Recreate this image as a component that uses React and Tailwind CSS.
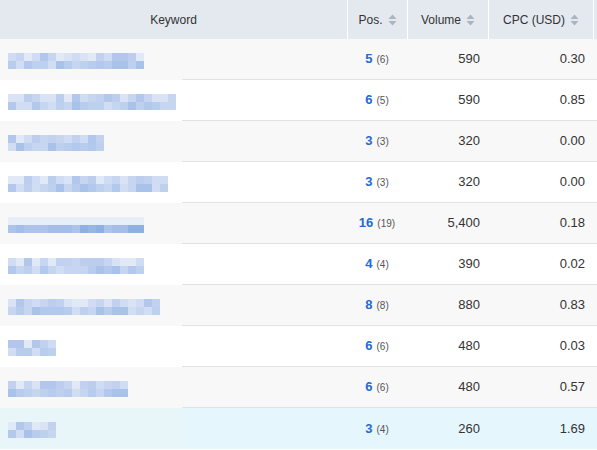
import React from 'react';

const rows = [
  { w: 17, pos: 5, prev: 6, vol: '590', cpc: '0.30', seed: 3 },
  { w: 21, pos: 6, prev: 5, vol: '590', cpc: '0.85', seed: 7 },
  { w: 12, pos: 3, prev: 3, vol: '320', cpc: '0.00', seed: 11 },
  { w: 20, pos: 3, prev: 3, vol: '320', cpc: '0.00', seed: 17 },
  { w: 17, pos: 16, prev: 19, vol: '5,400', cpc: '0.18', seed: 23, dark: true },
  { w: 17, pos: 4, prev: 4, vol: '390', cpc: '0.02', seed: 29 },
  { w: 19, pos: 8, prev: 8, vol: '880', cpc: '0.83', seed: 31 },
  { w: 6, pos: 6, prev: 6, vol: '480', cpc: '0.03', seed: 37 },
  { w: 15, pos: 6, prev: 6, vol: '480', cpc: '0.57', seed: 41 },
  { w: 6, pos: 3, prev: 4, vol: '260', cpc: '1.69', seed: 43, active: true },
];

const topShades = ['#bccdee', '#c7d5f0', '#d0dcf3', '#dae3f5', '#b3c6ec', '#c2d1ef', '#e2e9f6'];
const bottomShades = ['#b2c8ec', '#bdd0ee', '#c6d6f1', '#a9c2ea', '#b8ccee', '#d0ddf3'];
const darkShades = ['#98b6e4', '#a4bee7', '#8fb0e2', '#adc4ea'];

// pixelated stand-in for the blurred keyword
const Blur = ({ w, seed, dark }) => {
  let s = seed;
  const next = () => {
    s = (s * 9301 + 49297) % 233280;
    return s / 233280;
  };
  const top = Array.from({ length: w }, () => topShades[Math.floor(next() * topShades.length)]);
  const bottom = Array.from({ length: w }, () =>
    dark ? darkShades[Math.floor(next() * darkShades.length)] : bottomShades[Math.floor(next() * bottomShades.length)]
  );
  return (
    <div className="flex flex-col">
      <div className="flex">
        {top.map((c, i) => (
          <div key={i} className="w-2 h-2" style={{ backgroundColor: dark ? '#e8eef8' : c }} />
        ))}
      </div>
      <div className="flex">
        {bottom.map((c, i) => (
          <div key={i} className="w-2 h-2" style={{ backgroundColor: c }} />
        ))}
      </div>
    </div>
  );
};

const SortIcon = () => (
  <svg width="9" height="12" viewBox="0 0 9 12" className="ml-[5px]">
    <path d="M4.5 0.5 L8.5 5 L0.5 5 Z" fill="#aab5bf" />
    <path d="M0.5 7 L8.5 7 L4.5 11.5 Z" fill="#aab5bf" />
  </svg>
);

const App = () => {
  const cols = 'grid grid-cols-[347px_60px_81px_105px_1fr]';
  return (
    <div className="w-[597px] h-[450px] overflow-hidden bg-white text-[13px] text-[#333]" style={{ fontFamily: '"Liberation Sans", Arial, sans-serif' }}>
      <div className={`${cols} h-[39px] bg-[#e3e9ef] text-[12px] text-[#333]`}>
        <div className="flex items-center justify-center">Keyword</div>
        <div className="flex items-center justify-center border-l border-white">Pos.<SortIcon /></div>
        <div className="flex items-center justify-center border-l border-white">Volume<SortIcon /></div>
        <div className="flex items-center justify-center border-l border-white">CPC (USD)<SortIcon /></div>
        <div className="border-l border-white" />
      </div>
      {rows.map((r, i) => {
        const bg = r.active ? 'bg-[#e5f7fc]' : i % 2 === 0 ? 'bg-[#f8f8f8]' : 'bg-white';
        const line = r.active ? '' : 'border-b border-[#e2e2e2]';
        return (
          <div key={i} className={`${cols} h-[41px] ${bg}`}>
            <div className="flex">
              <div className={`w-[182px] flex items-center pl-2 pt-[3px] ${r.active ? 'bg-[#e8f6fa]' : ''}`}>
                <Blur w={r.w} seed={r.seed} dark={r.dark} />
              </div>
              <div className={`flex-1 ${line}`} />
            </div>
            <div className={`flex items-center justify-center ${line}`}>
              <span className="flex items-baseline">
                <span className="font-bold text-[#2469d6] text-[13px]">{r.pos}</span>
                <span className="ml-1 text-[10px] text-[#555]">({r.prev})</span>
              </span>
            </div>
            <div className={`flex items-center justify-end pr-2 ${line}`}>{r.vol}</div>
            <div className={`flex items-center justify-end pr-2 ${line}`}>{r.cpc}</div>
            <div className={line} />
          </div>
        );
      })}
    </div>
  );
};

export default App;
